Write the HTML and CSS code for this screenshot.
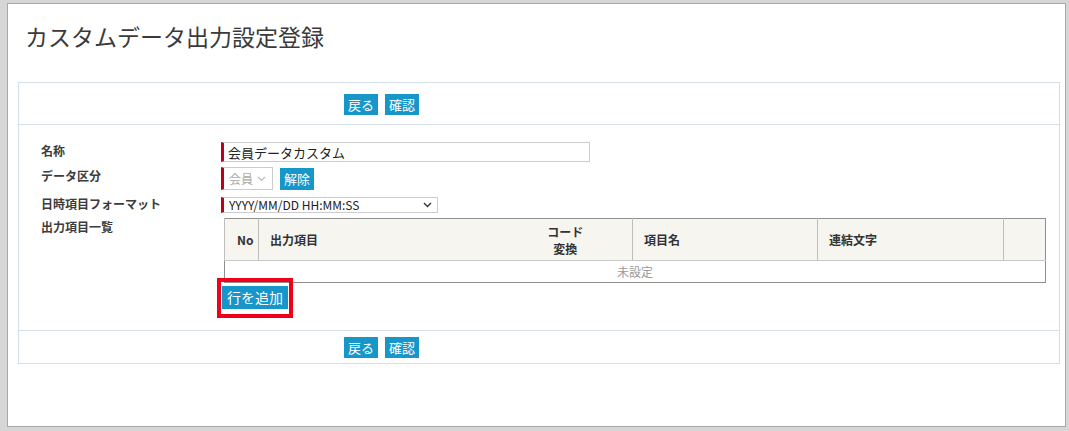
FILE: index.html
```
<html>

<head>
    <meta http-equiv="Content-Type" content="text/html; charset=UTF-8">
    <link rel="stylesheet" href="styles.css">
</head>

<body>
    <div class="frame">
        <h1 class="title">カスタムデータ出力設定登録</h1>

        <div class="panel">
            <div class="bar bar-top">
                <span class="btn">戻る</span>
                <span class="btn">確認</span>
            </div>

            <div class="form">
                <div class="label">名称</div>
                <div class="value">
                    <input class="text-input required" type="text" value="会員データカスタム">
                </div>

                <div class="label">データ区分</div>
                <div class="value row">
                    <span class="fake-select required disabled">
                        会員
                        <svg class="chevron" width="9" height="6" viewBox="0 0 9 6"><path d="M1 1 L4.5 4.5 L8 1" fill="none" stroke="#bbb" stroke-width="1.2"/></svg>
                    </span>
                    <span class="btn btn-small">解除</span>
                </div>

                <div class="label">日時項目フォーマット</div>
                <div class="value">
                    <span class="fake-select required format">
                        YYYY/MM/DD HH:MM:SS
                        <svg class="chevron" width="9" height="6" viewBox="0 0 9 6"><path d="M1 1 L4.5 4.5 L8 1" fill="none" stroke="#333" stroke-width="1.4"/></svg>
                    </span>
                </div>

                <div class="label">出力項目一覧</div>
                <div class="value">
                    <table class="items">
                        <tr>
                            <th class="col-no">No</th>
                            <th class="col-item">出力項目</th>
                            <th class="col-code">コード<br>変換</th>
                            <th class="col-name">項目名</th>
                            <th class="col-join">連結文字</th>
                            <th class="col-blank"></th>
                        </tr>
                        <tr>
                            <td class="empty" colspan="6">未設定</td>
                        </tr>
                    </table>
                    <div class="add-wrap">
                        <span class="btn btn-add">行を追加</span>
                    </div>
                </div>
            </div>

            <div class="bar bar-bottom">
                <span class="btn">戻る</span>
                <span class="btn">確認</span>
            </div>
        </div>
    </div>
</body>

</html>
```
FILE: styles.css
```
html,
body {
    margin: 0;
    padding: 0;
    background: #d6d6d6;
    font-family: "Noto Sans CJK JP", "Noto Sans", sans-serif;
    color: #333333;
}

.frame {
    margin: 3px 3px 0 7px;
    height: 424px;
    box-sizing: border-box;
    background: white;
    border: 1px solid #a8a8a8;
    padding: 0 5px 0 10px;
}

.title {
    margin: 0;
    padding: 16px 0 0 7px;
    height: 78px;
    box-sizing: border-box;
    font-size: 23px;
    font-weight: normal;
    line-height: 32px;
    color: #3a3a3a;
}

.panel {
    border: 1px solid #d3e0ea;
}

.bar {
    display: flex;
    gap: 7px;
    padding-left: 325px;
}

.bar-top {
    padding-top: 11px;
    padding-bottom: 9px;
    border-bottom: 1px solid #d3e0ea;
}

.bar-bottom {
    padding-top: 6px;
    padding-bottom: 5px;
    border-top: 1px solid #d3e0ea;
}

.btn {
    display: inline-block;
    background: #1796c9;
    color: white;
    font-size: 13px;
    line-height: 21px;
    height: 21px;
    padding: 0 4px;
}

.form {
    display: grid;
    grid-template-columns: 180px 1fr;
    padding: 17px 14px 16px 22px;
    align-items: start;
}

.label {
    font-size: 12px;
    font-weight: bold;
    color: #3c3c3c;
    line-height: 16px;
    padding-top: 1px;
}

.value {
    margin-bottom: 5px;
}

.row {
    display: flex;
    align-items: center;
    gap: 7px;
}

.required {
    border: 1px solid #cccccc;
    border-left: 3px solid #c00018;
}

.text-input {
    width: 369px;
    height: 20px;
    box-sizing: border-box;
    font-family: "Noto Sans CJK JP", sans-serif;
    font-size: 13px;
    color: #222222;
    padding: 0 4px;
    outline: none;
}

.fake-select {
    display: inline-flex;
    align-items: center;
    justify-content: space-between;
    box-sizing: border-box;
    padding: 0 6px 0 5px;
    font-size: 12px;
    background: white;
}

.disabled {
    width: 52px;
    height: 23px;
    color: #aaaaaa;
}

.format {
    width: 217px;
    height: 16px;
    line-height: 14px;
    color: #222222;
    padding-right: 5px;
    margin-top: 2px;
}

.btn-small {
    height: 22px;
    line-height: 22px;
}

.items {
    margin-left: 3px;
    width: 821px;
    table-layout: fixed;
    border-collapse: collapse;
    border: 1px solid #8f8f8f;
    font-size: 12px;
}

.items th {
    box-sizing: border-box;
    background: #f7f5ef;
    height: 42px;
    border-left: 1px solid #bdbdbd;
    border-bottom: 1px solid #c8c8c8;
    text-align: left;
    font-weight: bold;
    color: #333333;
    line-height: 17px;
    padding: 0 11px;
}

.items th.col-code {
    border-left: none;
    text-align: center;
    padding: 0;
}

.items th.col-no {
    width: 34px;
    padding: 0 0 0 12px;
}

.items th.col-item {
    width: 240px;
}

.items th.col-code {
    width: 134px;
}

.items th.col-name {
    width: 185px;
}

.items th.col-join {
    width: 186px;
}

.items th.col-blank {
    width: 42px;
}

.empty {
    height: 22px;
    text-align: center;
    color: #999999;
    padding: 0;
}

.add-wrap {
    position: relative;
    width: max-content;
    margin-top: 3px;
    margin-left: 1px;
    line-height: 0;
}

.add-wrap::after {
    content: "";
    position: absolute;
    top: -8px;
    left: -5px;
    right: -5px;
    bottom: -9px;
    border: 4px solid #f0001a;
}

.btn-add {
    height: 23px;
    line-height: 23px;
    font-size: 14px;
    padding: 0 5px;
}
```
